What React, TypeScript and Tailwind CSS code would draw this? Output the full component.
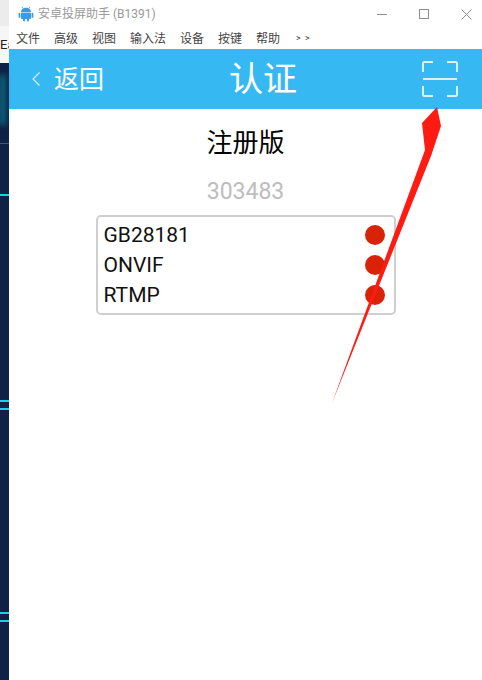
const cjk = "font-['Roboto','Noto_Sans_CJK_SC',sans-serif]";

const menus = ["文件", "高级", "视图", "输入法", "设备", "按键", "帮助"];
const protocols = ["GB28181", "ONVIF", "RTMP"];

function AndroidLogo() {
  return (
    <svg width="16" height="16" viewBox="0 0 16 16" fill="#3a9be8">
      <path d="M4 1l1.2 1.6M12 1l-1.2 1.6" stroke="#3a9be8" strokeWidth="0.8" />
      <path d="M3 6.2C3 3.6 5.2 1.8 8 1.8s5 1.8 5 4.4z" />
      <rect x="3" y="6.8" width="10" height="6.2" rx="1" />
      <rect x="0.6" y="6.8" width="1.8" height="5" rx="0.9" />
      <rect x="13.6" y="6.8" width="1.8" height="5" rx="0.9" />
      <rect x="5" y="12" width="2" height="3.6" rx="1" />
      <rect x="9" y="12" width="2" height="3.6" rx="1" />
    </svg>
  );
}

function ScanIcon() {
  return (
    <svg width="36" height="36" viewBox="0 0 36 36" fill="none" stroke="#d8f1fc" strokeWidth="2">
      <path d="M1 11V2.5Q1 1 2.5 1H11M25 1h8.5Q35 1 35 2.5V11M1 18h34M1 25v8.500Q1 35 2.500 35H11M25 35h8.500Q35 35 35 33.500V25" />
    </svg>
  );
}

export default function App() {
  return (
    <div className={`relative flex h-[680px] w-[482px] overflow-hidden bg-white ${cjk}`}>
      <aside className="flex w-[9px] shrink-0 flex-col">
        <div className="h-[26px] bg-[#ececec]" />
        <div className="h-[37px] overflow-hidden bg-[#f6f6f6] text-[13px] leading-[37px] text-[#222]">Ea</div>
        <div className="relative flex-1 bg-[#0f2144]">
          <div className="absolute top-[12px] h-[50px] w-[5px] bg-[#0b7f96] blur-[3px]" />
          <div className="absolute top-[80px] h-px w-full bg-[#45557a]" />
          <div className="absolute top-[131px] h-0.5 w-full bg-[#14d4e0]" />
          <div className="absolute top-[337px] h-0.5 w-full bg-[#14d4e0]" />
          <div className="absolute top-[345px] h-0.5 w-full bg-[#14d4e0]" />
          <div className="absolute top-[549px] h-0.5 w-full bg-[#14d4e0]" />
          <div className="absolute top-[557px] h-0.5 w-full bg-[#14d4e0]" />
        </div>
      </aside>

      <main className="flex min-w-0 flex-1 flex-col">
        <header className="flex h-[28px] items-center pl-[9px]">
          <AndroidLogo />
          <span className="ml-[4px] text-[12px] text-[#9a9a9a]">安卓投屏助手 (B1391)</span>
          <div className="ml-auto flex items-center gap-[32px] pr-[10px] text-[#8c8c8c]">
            <div className="h-px w-[10px] bg-[#8c8c8c]" />
            <div className="size-[10px] border border-[#8c8c8c]" />
            <svg width="11" height="11" viewBox="0 0 11 11" stroke="#8c8c8c" strokeWidth="1">
              <path d="M0.500 0.500l10 10M10.500 0.500l-10 10" />
            </svg>
          </div>
        </header>

        <nav className="flex h-[21px] items-center gap-[14px] pl-[7px] text-[12px] text-[#444]">
          {menus.map((m) => (
            <span key={m}>{m}</span>
          ))}
          <span className="ml-[2px] text-[9px] tracking-[1px]">&gt; &gt;</span>
        </nav>

        <div className="flex h-[60px] items-center justify-between bg-[#36b8f2] text-white">
          <div className="flex items-center pl-[22px]">
            <svg width="10" height="16" viewBox="0 0 10 16" fill="none" stroke="#d8f1fc" strokeWidth="1.200">
              <path d="M8.500 1.500L2 8l6.500 6.500" />
            </svg>
            <span className="ml-[13px] text-[25px] leading-none">返回</span>
          </div>
          <span className="text-[34px] leading-none">认证</span>
          <div className="pr-[24px]">
            <ScanIcon />
          </div>
        </div>

        <h1 className="mt-[16px] text-center text-[26px] leading-[36px] text-black">注册版</h1>
        <p className="mt-[16px] text-center text-[23px] leading-[30px] text-[#bdbdbd]">303483</p>

        <div className="mx-auto mt-[8px] flex h-[100px] w-[300px] flex-col justify-center rounded-[5px] border-2 border-[#cfcfcf] pl-[6px] pr-[9px] text-[21px] leading-[30px] text-[#111]">
          {protocols.map((p) => (
            <div key={p} className="flex items-center justify-between">
              <span>{p}</span>
              <span className="size-[20px] rounded-full bg-[#d92208]" />
            </div>
          ))}
        </div>
      </main>

      <svg className="absolute left-0 top-0" width="482" height="680" fill="#ff1a12">
        <path d="M332 403L425 150 422 123 437 107 441 126 431 156z" />
      </svg>
    </div>
  );
}
